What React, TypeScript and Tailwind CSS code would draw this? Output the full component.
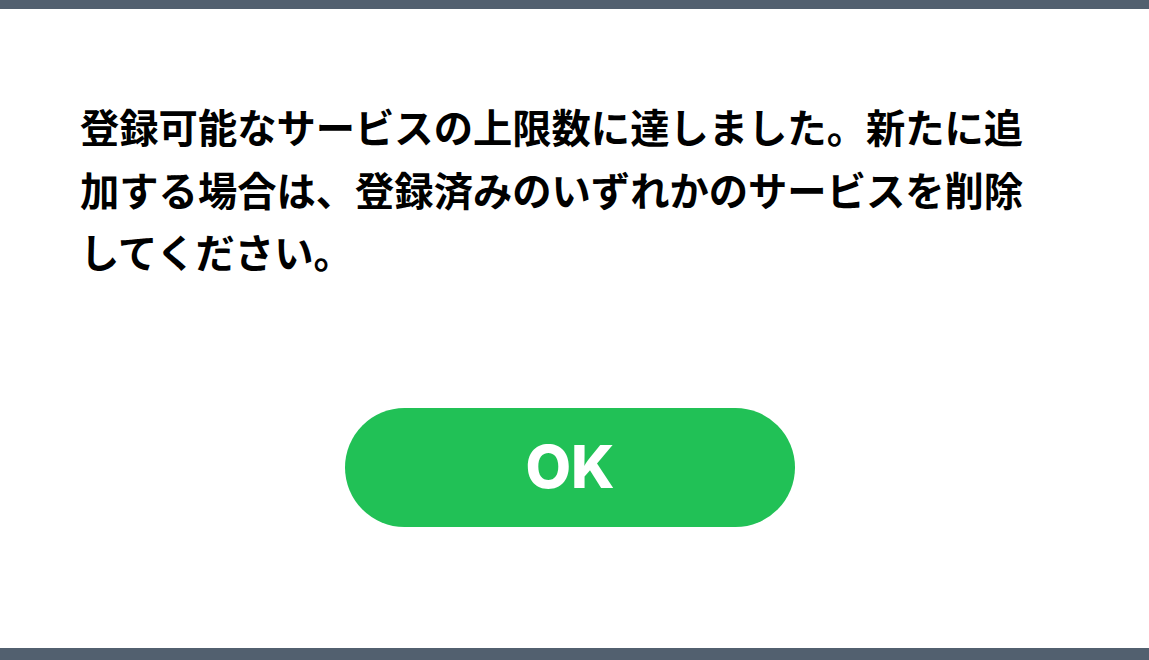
export default function App() {
  return (
    <div className="w-[1149px] h-[660px] flex flex-col bg-white" style={{ fontFamily: '"Noto Sans CJK JP", "Noto Sans", sans-serif' }}>
      <div className="h-[9px] bg-[#52606f]" />
      <div className="flex-1 flex flex-col pl-[80px] pt-[86px]">
        <div className="w-[980px]">
          <p className="w-[955px] text-[39.3px] leading-[62.5px] font-bold text-black">
            登録可能なサービスの上限数に達しました。新たに追加する場合は、登録済みのいずれかのサービスを削除してください。
          </p>
          <div className="flex justify-center mt-[125px]">
            <button
              className="w-[450px] h-[119px] rounded-full bg-[#21c156] text-white text-[59px] font-extrabold flex items-center justify-center"
              style={{ fontFamily: 'Inter, "Liberation Sans", sans-serif' }}
            >
              OK
            </button>
          </div>
        </div>
      </div>
      <div className="h-[12px] bg-[#52606f]" />
    </div>
  );
}
